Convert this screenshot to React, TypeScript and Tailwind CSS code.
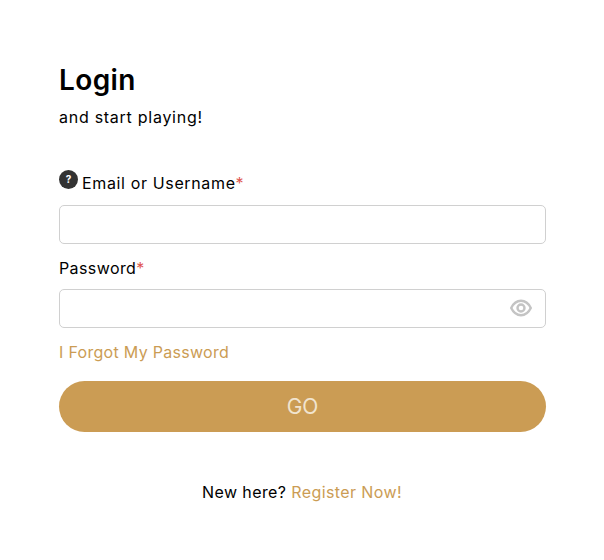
function EyeIcon() {
  return (
    <svg width="22" height="18" viewBox="0 0 22 18" fill="none" stroke="#c4c4c4">
      <path d="M1.200 9C3.500 4.300 7 1.800 11 1.800S18.500 4.300 20.800 9C18.500 13.700 15 16.200 11 16.200S3.500 13.700 1.200 9Z" strokeWidth="2.400" />
      <circle cx="11" cy="9" r="3.500" strokeWidth="2.400" />
    </svg>
  );
}

function Required() {
  return <span className="text-[#e0574f]">*</span>;
}

export default function App() {
  return (
    <div className="min-h-[560px] w-[604px] bg-white px-[59px] pt-[61px] font-['Inter','Open_Sans',sans-serif] text-black">
      <h1 className="text-[28px] font-semibold leading-[38px] tracking-[0.4px]">Login</h1>
      <p className="mt-[6px] text-[16px] leading-[24px] tracking-[0.73px]">and start playing!</p>

      <div className="mt-[42px] flex h-[24px] items-center text-[16px] tracking-[0.64px]">
        <span className="mr-[4px] mt-[-7px] flex h-[19px] w-[19px] items-center justify-center rounded-full bg-[#333333] text-[10px] font-bold tracking-normal text-white">
          ?
        </span>
        <span>
          Email or Username
          <Required />
        </span>
      </div>
      <input className="mt-[10px] block h-[39px] w-[487px] rounded-[5px] border border-[#d0d0d0] bg-white" />

      <div className="mt-[12px] h-[24px] text-[16px] leading-[24px] tracking-[0.4px]">
        Password
        <Required />
      </div>
      <div className="relative mt-[9px]">
        <input className="block h-[39px] w-[487px] rounded-[5px] border border-[#d0d0d0] bg-white" />
        <span className="absolute right-[13px] top-[10px]">
          <EyeIcon />
        </span>
      </div>

      <a className="mt-[12px] block h-[24px] text-[16px] leading-[24px] tracking-[0.3px] text-[#cb9c54]">I Forgot My Password</a>

      <button className="mt-[17px] flex h-[51px] w-[487px] items-center justify-center rounded-[26px] bg-[#cb9c54] text-[21px] text-[#f1e4cf]">
        GO
      </button>

      <p className="mt-[48px] text-center text-[16px] leading-[24px] tracking-[0.4px]">
        New here? <a className="text-[#cb9c54]">Register Now!</a>
      </p>
    </div>
  );
}
